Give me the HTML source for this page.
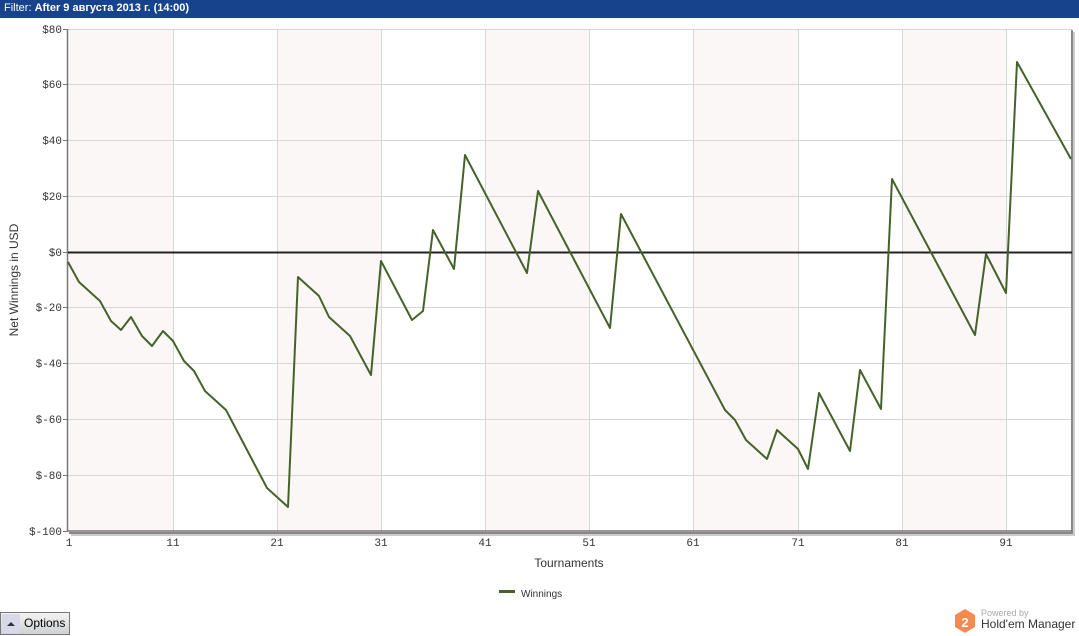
<!DOCTYPE html>
<html><head><meta charset="utf-8"><style>
body{margin:0;width:1079px;height:636px;background:#fff;overflow:hidden;font-family:"Liberation Sans",sans-serif;position:relative}
.top{position:absolute;left:0;top:0;width:1079px;height:18px;background:#17428c;color:#fff;font-size:11px;line-height:17px;padding-left:4px;box-sizing:border-box}
.top b{font-weight:bold}
.opt{position:absolute;left:0;top:612px;width:70px;height:23px;border:1px solid #777;background:linear-gradient(#f3f3f3,#cfd0d3);box-sizing:border-box;font-size:12px;line-height:21px}
.opt .ic{position:absolute;left:1px;top:1px;width:18px;height:19px;background:#d8d8e8}
.opt .ic:after{content:"";position:absolute;left:5px;top:8px;border:4px solid transparent;border-bottom:4px solid #333;border-top:0}
.opt span{position:absolute;left:23px}
</style></head><body>
<div class="top">Filter: <b>After 9 августа 2013 г. (14:00)</b></div>
<svg width="1079" height="636" style="position:absolute;left:0;top:0" font-family="Liberation Mono, monospace" font-size="11" fill="#333">
<g fill="#fbf7f7">
<rect x="69" y="29" width="104" height="502"/><rect x="277" y="29" width="104" height="502"/><rect x="485" y="29" width="104" height="502"/><rect x="693" y="29" width="105" height="502"/><rect x="902" y="29" width="104" height="502"/>
</g>
<g stroke="#d6d6d6" stroke-width="1">
<path d="M68 84.5H1072M68 140.5H1072M68 196.5H1072M68 307.5H1072M68 363.5H1072M68 419.5H1072M68 475.5H1072M68 29.5H1072"/>
<path d="M173.5 29V531M277.5 29V531M381.5 29V531M485.5 29V531M589.5 29V531M693.5 29V531M798.5 29V531M902.5 29V531M1006.5 29V531"/>
</g>
<path d="M1072 30V533H69" stroke="#888" stroke-width="2" fill="none"/>
<path d="M1074 32V535H71" stroke="#ccc" stroke-width="2" fill="none"/>
<path d="M67.5 29V531H1072" stroke="#777" stroke-width="1.5" fill="none"/>
<path d="M68 252.5H1072" stroke="#222" stroke-width="2"/>
<path d="M63 29.5h5M63 84.5h5M63 140.5h5M63 196.5h5M63 252.5h5M63 307.5h5M63 363.5h5M63 419.5h5M63 475.5h5M63 531.5h5" stroke="#777"/>
<polyline fill="none" stroke="#46622a" stroke-width="2" stroke-linejoin="round" points="68,262 79,282 100,301 111,321 121,330 131,317 142,336 152,346 163,331 173,341 184,361 194,371 205,391 226,410 267,488 288,507 298,277 319,296 329,317 350,336 371,375 381,261 412,320 423,311 433,230 454,269 465,155 527,273 538,191 610,328 621,214 725,410 735,420 746,440 767,459 777,430 798,449 808,469 819,393 850,451 860,370 881,409 892,179 975,335 986,254 1006,293 1017,62 1071,159"/>
<g text-anchor="end">
<text x="62" y="33">$80</text><text x="62" y="88">$60</text><text x="62" y="144">$40</text><text x="62" y="200">$20</text><text x="62" y="256">$0</text><text x="62" y="311">$-20</text><text x="62" y="367">$-40</text><text x="62" y="423">$-60</text><text x="62" y="479">$-80</text><text x="62" y="535">$-100</text>
</g>
<g text-anchor="middle">
<text x="69" y="546">1</text><text x="173" y="546">11</text><text x="277" y="546">21</text><text x="381" y="546">31</text><text x="485" y="546">41</text><text x="589" y="546">51</text><text x="693" y="546">61</text><text x="798" y="546">71</text><text x="902" y="546">81</text><text x="1006" y="546">91</text>
</g>
<text x="569" y="567" text-anchor="middle" font-family="Liberation Sans, sans-serif" font-size="12">Tournaments</text>
<text transform="translate(18 280) rotate(-90)" text-anchor="middle" font-family="Liberation Sans, sans-serif" font-size="12">Net Winnings in USD</text>
<rect x="499" y="590" width="16" height="3" fill="#46622a"/>
<text x="521" y="597" font-family="Liberation Sans, sans-serif" font-size="10">Winnings</text>
<polygon points="965,609 975,615 975,627 965,633 955,627 955,615" fill="#f5894f"/>
<text x="965" y="627" text-anchor="middle" fill="#fff" font-family="Liberation Sans, sans-serif" font-weight="bold" font-size="13">2</text>
<text x="981" y="616" fill="#aaa" font-family="Liberation Sans, sans-serif" font-size="9">Powered by</text>
<text x="981" y="628" fill="#333" font-family="Liberation Sans, sans-serif" font-size="12">Hold'em Manager</text>
</svg>
<div class="opt"><div class="ic"></div><span>Options</span></div>
</body></html>
